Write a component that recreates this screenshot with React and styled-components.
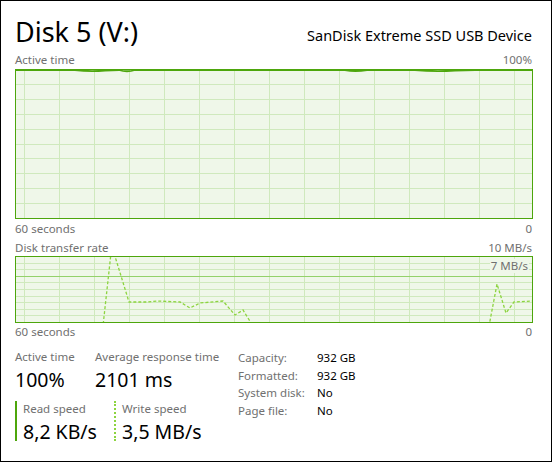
import React from 'react';
import styled, { createGlobalStyle } from 'styled-components';

const GlobalStyle = createGlobalStyle`
    html, body {
        margin: 0;
        padding: 0;
        background: #ffffff;
    }
    body {
        font-family: "Noto Sans", "Open Sans", sans-serif;
    }
`;

const Frame = styled.div`
    box-sizing: border-box;
    width: 552px;
    height: 462px;
    border: 1px solid #000;
    padding: 14px 19px 0 14px;
    display: flex;
    flex-direction: column;
`;

const Header = styled.header`
    display: flex;
    justify-content: space-between;
    align-items: flex-end;
    height: 37px;
`;

const Title = styled.h1`
    margin: 0 0 3px;
    font-size: 27px;
    font-weight: 400;
    line-height: 34px;
    color: #000;
`;

const DeviceName = styled.div`
    font-size: 14.5px;
    line-height: 20px;
    color: #000;
    margin-bottom: 7px;
`;

const LabelRow = styled.div`
    display: flex;
    justify-content: space-between;
    font-size: 11.5px;
    line-height: 16px;
    color: #707070;
    margin-top: ${({ $top }) => $top || 0}px;
    margin-bottom: ${({ $bottom }) => $bottom || 0}px;
`;

const GraphWrap = styled.div`
    position: relative;
    width: 518px;
    height: ${({ $h }) => $h}px;
    svg {
        display: block;
    }
`;

const ScaleTag = styled.span`
    position: absolute;
    right: 4px;
    top: 3px;
    font-size: 11.5px;
    line-height: 14px;
    color: #707070;
    background: #eff7e9;
    padding: 0 1px;
`;

const Stats = styled.section`
    display: grid;
    grid-template-columns: 223px auto;
    margin-top: 9px;
`;

const StatGrid = styled.div`
    display: grid;
    grid-template-columns: 80px auto;
    row-gap: 6px;
`;

const Stat = styled.div`
    display: flex;
    flex-direction: column;
`;

const Speed = styled.div`
    display: flex;
    flex-direction: column;
    padding-left: 6px;
    margin-left: ${({ $shift }) => $shift || 0}px;
    border-left: 2px ${({ $dotted }) => ($dotted ? 'dotted' : 'solid')}
        ${({ $dotted }) => ($dotted ? '#8cd43f' : '#4da60c')};
    height: 40px;
    margin-top: 2px;
`;

const StatLabel = styled.div`
    font-size: 11.5px;
    line-height: 16px;
    color: #707070;
    white-space: nowrap;
`;

const StatValue = styled.div`
    font-size: 19.5px;
    line-height: 26px;
    margin-top: 2px;
    color: #000;
    white-space: nowrap;
`;

const InfoTable = styled.dl`
    display: grid;
    grid-template-columns: 79px auto;
    grid-auto-rows: 17.7px;
    margin: 0;
    font-size: 11.5px;
    line-height: 17.7px;
`;

const InfoKey = styled.dt`
    color: #707070;
`;

const InfoVal = styled.dd`
    margin: 0;
    color: #000;
`;

const GRAPH_W = 518;
const BORDER = '#4da60c';
const FILL = '#eff7e9';
const GRID = '#cfe9bd';
const LINE = '#8cd43f';

function Grid({ height, rows, accentRow }) {
    const vert = [];
    for (let x = 9; x < GRAPH_W; x += 35) vert.push(x);
    const horiz = [];
    for (let i = 1; i < rows; i++) horiz.push(Math.round((height - 1) * i / rows));
    return (
        <g shapeRendering="crispEdges">
            <rect x="0" y="0" width={GRAPH_W} height={height} fill={FILL} />
            {vert.map((x) => (
                <line key={'v' + x} x1={x + 0.5} x2={x + 0.5} y1="0" y2={height} stroke={GRID} />
            ))}
            {horiz.map((y, i) => (
                <line
                    key={'h' + y}
                    x1="0"
                    x2={GRAPH_W}
                    y1={y + 0.5}
                    y2={y + 0.5}
                    stroke={i + 1 === accentRow ? '#93d16a' : GRID}
                    strokeWidth={i + 1 === accentRow ? 1.4 : 1}
                />
            ))}
        </g>
    );
}

function ActiveGraph() {
    const h = 150;
    const wave =
        'M0 1 L60 1 Q75 3 90 1.5 L104 1 Q112 3.5 120 1 L200 1.2 L210 1 L330 1 Q340 3 352 1 L400 1 Q420 3 440 1.5 L460 1 L518 1';
    return (
        <GraphWrap $h={h}>
            <svg width={GRAPH_W} height={h}>
                <Grid height={h} rows={10} />
                <path d={wave} fill="none" stroke={BORDER} strokeWidth="1.8" />
                <rect x="0.5" y="0.5" width={GRAPH_W - 1} height={h - 1} fill="none" stroke={BORDER} shapeRendering="crispEdges" />
            </svg>
        </GraphWrap>
    );
}

// transfer rate samples in graph pixels; values below the frame sit at zero
const transfer = [
    [0, 70], [88, 70], [96, -3], [99, -3], [114, 46], [132, 46], [142, 45], [165, 46],
    [175, 52], [185, 47], [208, 45], [220, 59], [228, 54], [238, 70], [474, 70],
    [482, 28], [491, 57], [499, 46], [517, 45],
];

function TransferGraph() {
    const h = 67;
    const d = transfer.map(([x, y], i) => (i ? 'L' : 'M') + x + ' ' + y).join(' ');
    return (
        <GraphWrap $h={h}>
            <svg width={GRAPH_W} height={h}>
                <Grid height={h} rows={10} accentRow={3} />
                <path d={d} fill="none" stroke={LINE} strokeWidth="1.3" strokeDasharray="3 2" />
                <rect x="0.5" y="0.5" width={GRAPH_W - 1} height={h - 1} fill="none" stroke={BORDER} shapeRendering="crispEdges" />
            </svg>
            <ScaleTag>7 MB/s</ScaleTag>
        </GraphWrap>
    );
}

export default function App() {
    return (
        <>
            <GlobalStyle />
            <Frame>
                <Header>
                    <Title>Disk 5 (V:)</Title>
                    <DeviceName>SanDisk Extreme SSD USB Device</DeviceName>
                </Header>

                <LabelRow $bottom={1}>
                    <span>Active time</span>
                    <span>100%</span>
                </LabelRow>
                <ActiveGraph />
                <LabelRow $top={2}>
                    <span>60 seconds</span>
                    <span>0</span>
                </LabelRow>

                <LabelRow $top={3}>
                    <span>Disk transfer rate</span>
                    <span>10 MB/s</span>
                </LabelRow>
                <TransferGraph />
                <LabelRow $top={1}>
                    <span>60 seconds</span>
                    <span>0</span>
                </LabelRow>

                <Stats>
                    <StatGrid>
                        <Stat>
                            <StatLabel>Active time</StatLabel>
                            <StatValue>100%</StatValue>
                        </Stat>
                        <Stat>
                            <StatLabel>Average response time</StatLabel>
                            <StatValue>2101 ms</StatValue>
                        </Stat>
                        <Speed>
                            <StatLabel>Read speed</StatLabel>
                            <StatValue>8,2 KB/s</StatValue>
                        </Speed>
                        <Speed $dotted $shift={19}>
                            <StatLabel>Write speed</StatLabel>
                            <StatValue>3,5 MB/s</StatValue>
                        </Speed>
                    </StatGrid>
                    <InfoTable>
                        <InfoKey>Capacity:</InfoKey>
                        <InfoVal>932 GB</InfoVal>
                        <InfoKey>Formatted:</InfoKey>
                        <InfoVal>932 GB</InfoVal>
                        <InfoKey>System disk:</InfoKey>
                        <InfoVal>No</InfoVal>
                        <InfoKey>Page file:</InfoKey>
                        <InfoVal>No</InfoVal>
                    </InfoTable>
                </Stats>
            </Frame>
        </>
    );
}
